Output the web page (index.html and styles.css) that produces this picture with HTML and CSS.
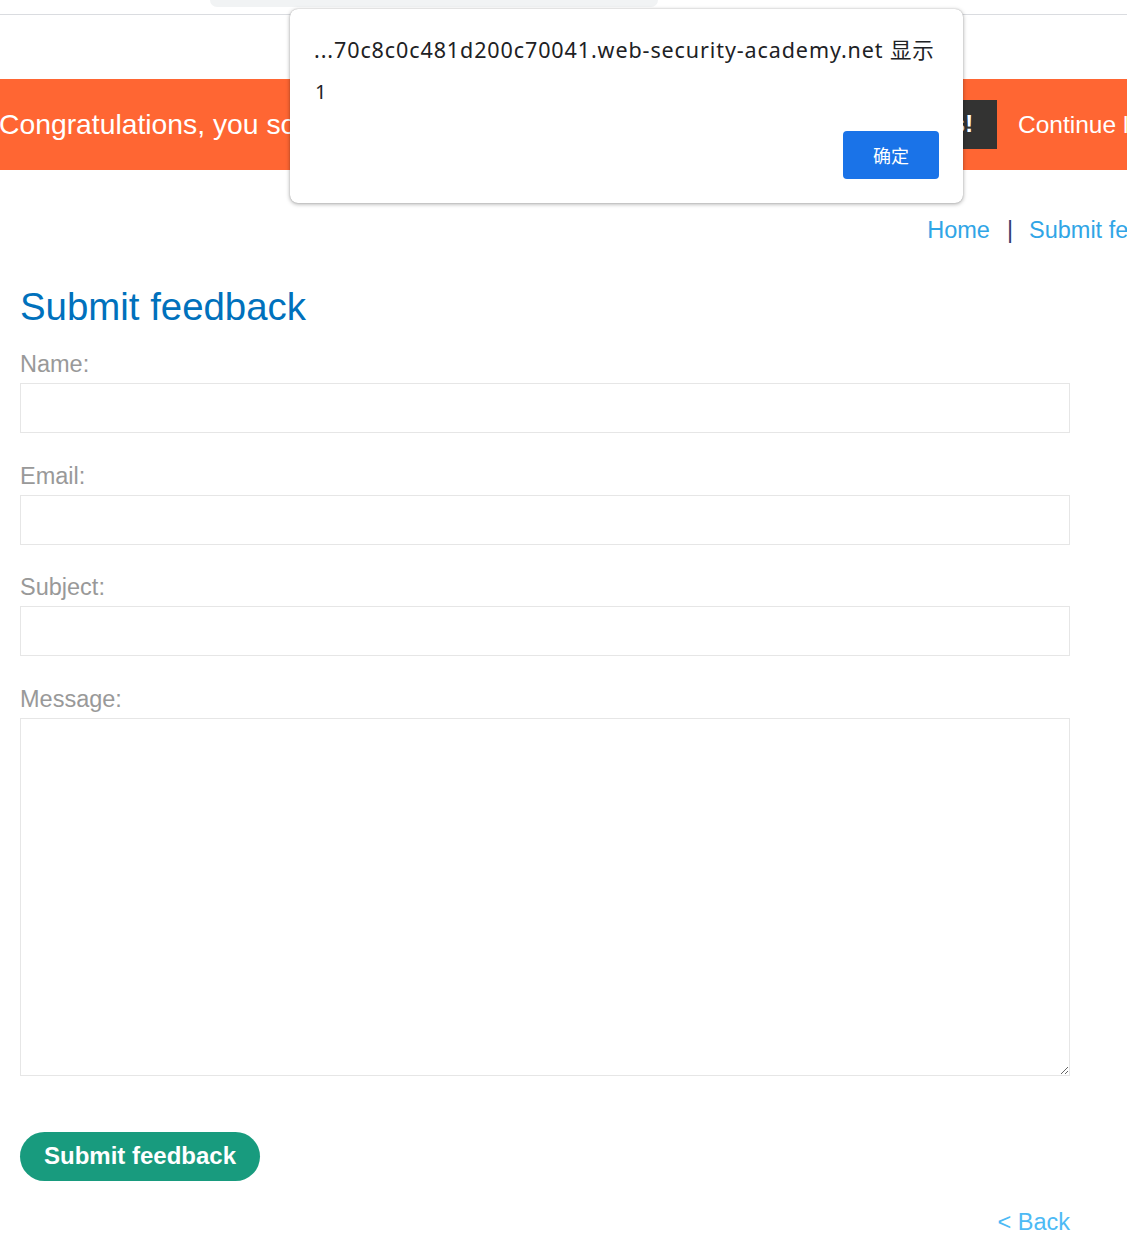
FILE: index.html
```html
<!DOCTYPE html>
<html lang="en">
<head>
<meta charset="utf-8">
<title>Submit feedback</title>
<link rel="stylesheet" href="styles.css">
</head>
<body>
<div class="chrome">
  <div class="omnibox"></div>
</div>
<div class="banner">
  <span class="banner-title">Congratulations, you solved the lab!</span>
  <span class="share">Share your skills!</span>
  <span class="continue">Continue learning</span>
</div>
<nav class="nav">
  <a class="nav-link" href="#">Home</a>
  <span class="nav-sep">|</span>
  <a class="nav-link nav-last" href="#">Submit feedback</a>
</nav>
<main class="content">
  <h1 class="title">Submit feedback</h1>
  <form class="form">
    <label class="label">Name:</label>
    <input class="field" type="text">
    <label class="label">Email:</label>
    <input class="field" type="text">
    <label class="label">Subject:</label>
    <input class="field" type="text">
    <label class="label">Message:</label>
    <textarea class="field area"></textarea>
    <button class="submit" type="button">Submit feedback</button>
  </form>
  <div class="back-row"><a class="back" href="#">&lt; Back</a></div>
</main>
<div class="dialog">
  <div class="dialog-title">...70c8c0c481d200c70041.web-security-academy.net 显示</div>
  <div class="dialog-msg">1</div>
  <div class="dialog-actions"><button class="ok" type="button">确定</button></div>
</div>
</body>
</html>
```
FILE: styles.css
```css
html, body {
  margin: 0;
  padding: 0;
  background: #fff;
  overflow: hidden;
}
body {
  font-family: "Liberation Sans", Arial, sans-serif;
  width: 1127px;
}
.chrome {
  height: 14px;
  border-bottom: 1px solid #dadce0;
  margin-bottom: 64px;
  padding-left: 210px;
}
.omnibox {
  width: 448px;
  height: 7px;
  background: #f1f3f4;
  border-radius: 0 0 12px 12px;
}
.banner {
  height: 91px;
  background: #ff6633;
  display: flex;
  align-items: center;
  overflow: hidden;
  color: #fff;
}
.banner-title {
  flex: 1 1 auto;
  min-width: 0;
  margin-left: -1px;
  font-size: 28.3px;
  white-space: nowrap;
  overflow: hidden;
}
.share {
  flex: none;
  background: #333332;
  height: 49px;
  line-height: 49px;
  padding: 0 24px;
  font-size: 23.5px;
  font-weight: bold;
  white-space: nowrap;
}
.continue {
  flex: 0 0 109px;
  margin-left: 21px;
  font-size: 24.5px;
  white-space: nowrap;
  overflow: hidden;
}
.nav {
  display: flex;
  justify-content: flex-end;
  align-items: center;
  height: 44px;
  margin-top: 38px;
  font-size: 23.5px;
}
.nav-link {
  color: #30a5e6;
  text-decoration: none;
  white-space: nowrap;
}
.nav-sep {
  color: #343a6e;
  margin: 0 16px 0 17px;
}
.nav-last {
  flex: 0 0 98px;
  overflow: hidden;
}
.content {
  padding: 0 20px;
  width: 1050px;
}
.title {
  margin: 33px 0 21px;
  font-size: 38.4px;
  line-height: 44px;
  font-weight: normal;
  color: #0071bc;
}
.form {
  display: flex;
  flex-direction: column;
  align-items: flex-start;
}
.label {
  font-size: 23.5px;
  line-height: 28px;
  color: #999;
  margin-bottom: 5px;
}
.field {
  box-sizing: border-box;
  width: 1050px;
  height: 50px;
  margin: 0 0 28.5px;
  border: 1px solid #e6e6e6;
  border-radius: 0;
  background: #fff;
  font: inherit;
}
.area {
  height: 358px;
  margin-bottom: 56px;
  resize: vertical;
}
.submit {
  width: 240px;
  height: 49px;
  border: none;
  border-radius: 25px;
  background: #189b7e;
  color: #fff;
  font-family: "Liberation Sans", Arial, sans-serif;
  font-size: 24px;
  font-weight: bold;
  padding: 0;
}
.back-row {
  display: flex;
  justify-content: flex-end;
  margin-top: 27px;
  font-size: 23.5px;
  line-height: 28px;
}
.back {
  color: #4dbaf5;
  text-decoration: none;
}
.dialog {
  position: absolute;
  left: 290px;
  top: 9px;
  width: 673px;
  height: 194px;
  box-sizing: border-box;
  padding: 24px 24px 24px 25px;
  background: #fff;
  border-radius: 8px;
  box-shadow: 0 1px 4px rgba(0,0,0,0.35), 0 0 1px rgba(0,0,0,0.3);
  display: flex;
  flex-direction: column;
  font-family: "Noto Sans", "Noto Sans CJK SC", sans-serif;
  color: #202124;
}
.dialog-title {
  font-size: 21.5px;
  letter-spacing: 0.9px;
  line-height: 34px;
  white-space: nowrap;
  margin-left: -1px;
}
.dialog-msg {
  font-size: 20px;
  line-height: 28px;
  margin-top: 11px;
}
.dialog-actions {
  display: flex;
  justify-content: flex-end;
  margin-top: auto;
}
.ok {
  width: 96px;
  height: 48px;
  border: none;
  border-radius: 4px;
  background: #1a73e8;
  color: #fff;
  font-family: "Noto Sans CJK SC", sans-serif;
  font-size: 18px;
  padding: 0;
}
```
